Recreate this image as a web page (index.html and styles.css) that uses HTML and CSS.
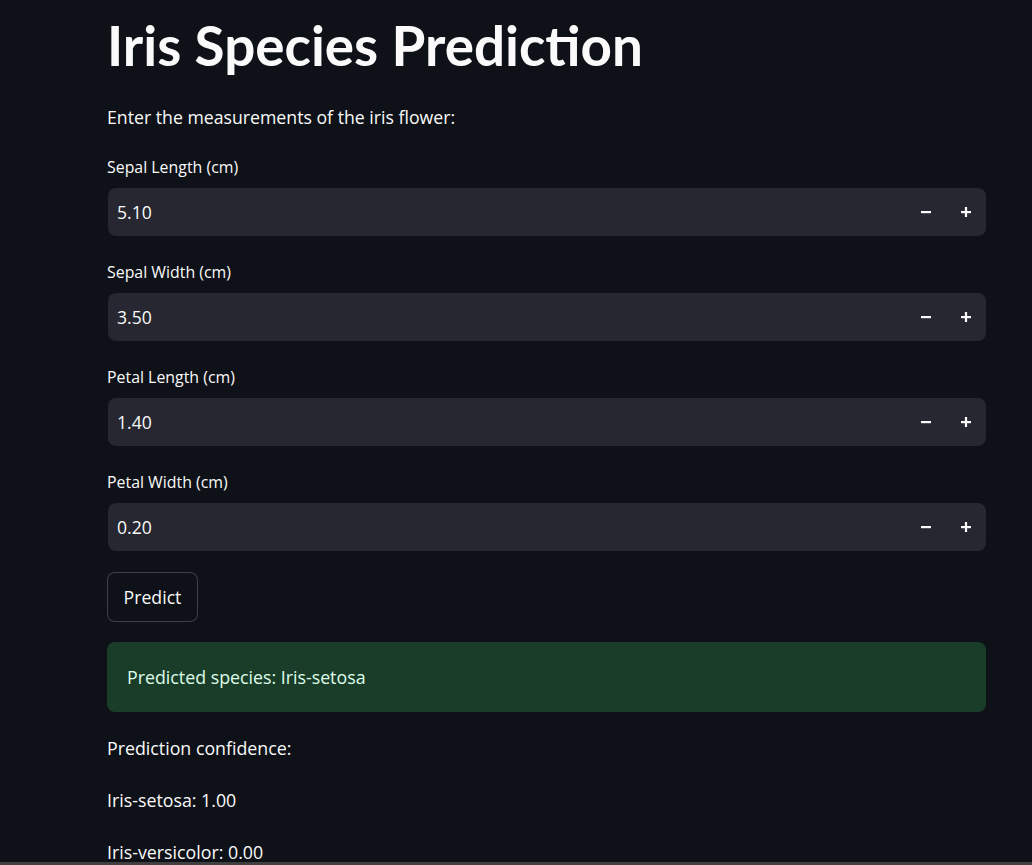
FILE: index.html
```html
<!DOCTYPE html>
<html lang="en">
<head>
<meta charset="utf-8">
<title>Iris Species Prediction</title>
<link rel="stylesheet" href="styles.css">
</head>
<body>
<main class="page">
  <h1 class="title">Iris Species Prediction</h1>
  <p class="intro">Enter the measurements of the iris flower:</p>
  <div class="fields">
    <div class="field">
      <label class="label">Sepal Length (cm)</label>
      <div class="input">
        <span class="value">5.10</span>
        <div class="steps">
          <button class="step" aria-label="decrement"><svg width="12" height="12" viewBox="0 0 12 12"><rect x="1" y="5" width="10" height="2.2" fill="#fafafa"/></svg></button>
          <button class="step" aria-label="increment"><svg width="12" height="12" viewBox="0 0 12 12"><rect x="1" y="5" width="10" height="2.2" fill="#fafafa"/><rect x="4.9" y="1" width="2.2" height="10" fill="#fafafa"/></svg></button>
        </div>
      </div>
    </div>
    <div class="field">
      <label class="label">Sepal Width (cm)</label>
      <div class="input">
        <span class="value">3.50</span>
        <div class="steps">
          <button class="step" aria-label="decrement"><svg width="12" height="12" viewBox="0 0 12 12"><rect x="1" y="5" width="10" height="2.2" fill="#fafafa"/></svg></button>
          <button class="step" aria-label="increment"><svg width="12" height="12" viewBox="0 0 12 12"><rect x="1" y="5" width="10" height="2.2" fill="#fafafa"/><rect x="4.9" y="1" width="2.2" height="10" fill="#fafafa"/></svg></button>
        </div>
      </div>
    </div>
    <div class="field">
      <label class="label">Petal Length (cm)</label>
      <div class="input">
        <span class="value">1.40</span>
        <div class="steps">
          <button class="step" aria-label="decrement"><svg width="12" height="12" viewBox="0 0 12 12"><rect x="1" y="5" width="10" height="2.2" fill="#fafafa"/></svg></button>
          <button class="step" aria-label="increment"><svg width="12" height="12" viewBox="0 0 12 12"><rect x="1" y="5" width="10" height="2.2" fill="#fafafa"/><rect x="4.9" y="1" width="2.2" height="10" fill="#fafafa"/></svg></button>
        </div>
      </div>
    </div>
    <div class="field">
      <label class="label">Petal Width (cm)</label>
      <div class="input">
        <span class="value">0.20</span>
        <div class="steps">
          <button class="step" aria-label="decrement"><svg width="12" height="12" viewBox="0 0 12 12"><rect x="1" y="5" width="10" height="2.2" fill="#fafafa"/></svg></button>
          <button class="step" aria-label="increment"><svg width="12" height="12" viewBox="0 0 12 12"><rect x="1" y="5" width="10" height="2.2" fill="#fafafa"/><rect x="4.9" y="1" width="2.2" height="10" fill="#fafafa"/></svg></button>
        </div>
      </div>
    </div>
  </div>
  <button class="predict">Predict</button>
  <div class="success">Predicted species: Iris-setosa</div>
  <p class="line first">Prediction confidence:</p>
  <p class="line">Iris-setosa: 1.00</p>
  <p class="line">Iris-versicolor: 0.00</p>
</main>
<div class="hbar"></div>
</body>
</html>
```

FILE: styles.css
```css
html, body {
  margin: 0;
  padding: 0;
  background: #0e1117;
  height: 100%;
  overflow: hidden;
}
body {
  color: #fafafa;
  font-family: "Open Sans", "Noto Sans", sans-serif;
}
.page {
  width: 879px;
  margin-left: 107px;
  display: flex;
  flex-direction: column;
}
.title {
  margin: 0;
  height: 91px;
  display: flex;
  align-items: center;
  font-family: "Lato", "Open Sans", sans-serif;
  font-size: 54.8px;
  font-weight: 700;
  line-height: 1;
}
.intro {
  margin: 0;
  height: 51px;
  display: flex;
  align-items: center;
  font-size: 17.7px;
}
.fields {
  padding-top: 4px;
  display: flex;
  flex-direction: column;
  gap: 15px;
}
.field {
  display: flex;
  flex-direction: column;
}
.label {
  height: 42px;
  display: flex;
  align-items: center;
  font-size: 15.9px;
}
.input {
  height: 48px;
  margin-left: 1px;
  background: #262730;
  border-radius: 8px;
  display: flex;
  align-items: center;
  justify-content: space-between;
  padding-left: 9px;
  padding-right: 4px;
}
.value {
  font-size: 17.6px;
}
.steps {
  display: flex;
  gap: 8px;
}
.step {
  width: 32px;
  height: 32px;
  padding: 0;
  border: 0;
  background: transparent;
  display: flex;
  align-items: center;
  justify-content: center;
}
.predict {
  margin-top: 21px;
  align-self: flex-start;
  height: 50px;
  width: 91px;
  background: #0e1117;
  border: 1px solid rgba(250, 250, 250, 0.2);
  border-radius: 8px;
  color: #fafafa;
  font-family: inherit;
  font-size: 17.7px;
  padding: 0;
}
.success {
  margin-top: 20px;
  height: 70px;
  background: #1a3d2a;
  border-radius: 8px;
  color: #dffde9;
  display: flex;
  align-items: center;
  padding-left: 20px;
  font-size: 17.8px;
}
.line {
  margin: 12px 0 0;
  height: 40px;
  display: flex;
  align-items: center;
  font-size: 17.8px;
}
.line.first {
  margin-top: 16px;
}
.hbar {
  position: fixed;
  left: 0;
  right: 0;
  bottom: 0;
  height: 3px;
  background: #3f3f3f;
}
```
